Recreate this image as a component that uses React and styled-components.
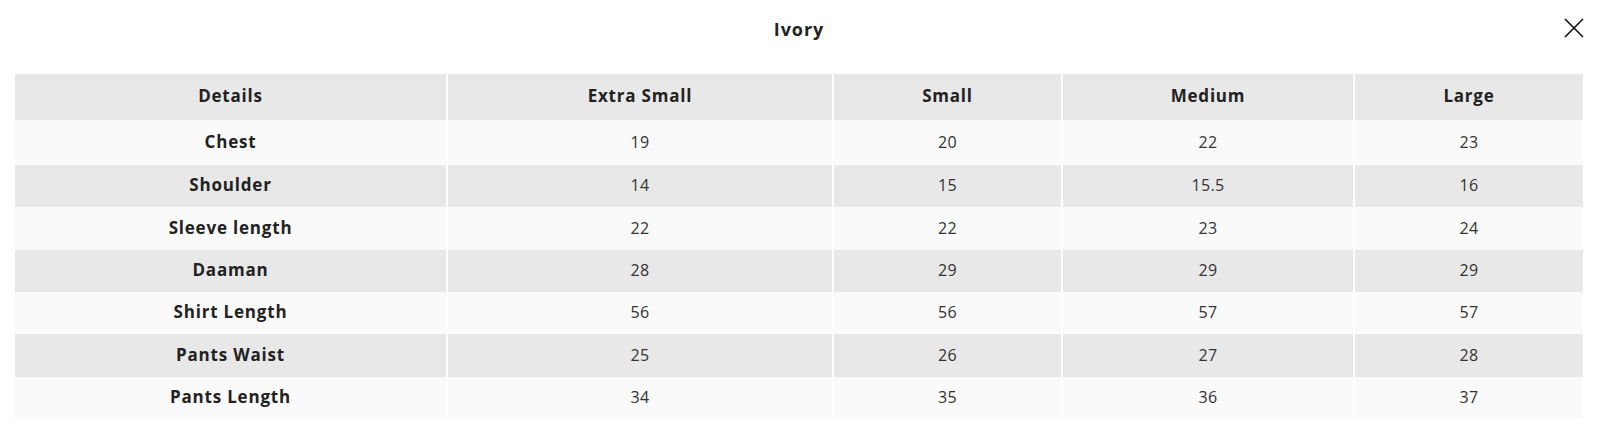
import styled, { createGlobalStyle } from 'styled-components';

const GlobalStyle = createGlobalStyle`
  body {
    margin: 0;
    background: #fff;
    font-family: "Open Sans", "Liberation Sans", sans-serif;
    color: #222;
  }
`;

const Modal = styled.div`
  width: 1597px;
  height: 446px;
  padding: 0 14px 0 15px;
  box-sizing: border-box;
  position: relative;
`;

const Header = styled.div`
  height: 74px;
  display: flex;
  justify-content: center;
  align-items: flex-start;
`;

const Title = styled.h2`
  margin: 17px 0 0;
  font-size: 18px;
  font-weight: 700;
  letter-spacing: 0.9px;
  color: #222;
`;

const CloseButton = styled.button`
  position: absolute;
  top: 17px;
  right: 12px;
  background: none;
  border: none;
  padding: 0;
  cursor: pointer;
  display: flex;
`;

const Table = styled.table`
  width: 100%;
  border-collapse: collapse;
  table-layout: fixed;
`;

const Row = styled.tr`
  background: ${(p) => (p.$shade ? '#e8e8e8' : '#fafafa')};
  height: ${(p) => p.$h}px;
`;

const Cell = styled.td`
  text-align: center;
  vertical-align: middle;
  padding: 0 0 ${(p) => (p.$bold ? 3 : 2)}px;
  font-size: ${(p) => (p.$bold ? 17 : 16)}px;
  font-weight: ${(p) => (p.$bold ? 700 : 400)};
  color: ${(p) => (p.$bold ? '#222' : '#333')};
  border-left: 2px solid #fff;
  letter-spacing: ${(p) => (p.$bold ? '0.8px' : '0.3px')};
  &:first-child {
    border-left: none;
  }
`;

const widths = [432, 386, 229, 292, 229];
const sizes = ['Extra Small', 'Small', 'Medium', 'Large'];
const rows = [
  ['Chest', 19, 20, 22, 23],
  ['Shoulder', 14, 15, 15.5, 16],
  ['Sleeve length', 22, 22, 23, 24],
  ['Daaman', 28, 29, 29, 29],
  ['Shirt Length', 56, 56, 57, 57],
  ['Pants Waist', 25, 26, 27, 28],
  ['Pants Length', 34, 35, 36, 37],
];
const heights = [45, 42, 43, 42, 42, 43, 42];

export default function App() {
  return (
    <Modal>
      <GlobalStyle />
      <Header>
        <Title>Ivory</Title>
      </Header>
      <CloseButton aria-label="Close">
        <svg width="22" height="22" viewBox="0 0 22 22" fill="none" stroke="#111" strokeWidth="1.6">
          <path d="M2 2 L20 20 M20 2 L2 20" />
        </svg>
      </CloseButton>
      <Table>
        <colgroup>
          {widths.map((w, i) => <col key={i} style={{ width: w }} />)}
        </colgroup>
        <tbody>
          <Row $shade $h={46}>
            <Cell $bold>Details</Cell>
            {sizes.map((s) => <Cell $bold key={s}>{s}</Cell>)}
          </Row>
          {rows.map((r, i) => (
            <Row key={r[0]} $shade={i % 2 === 1} $h={heights[i]}>
              <Cell $bold>{r[0]}</Cell>
              {r.slice(1).map((v, j) => <Cell key={j}>{v}</Cell>)}
            </Row>
          ))}
        </tbody>
      </Table>
    </Modal>
  );
}
